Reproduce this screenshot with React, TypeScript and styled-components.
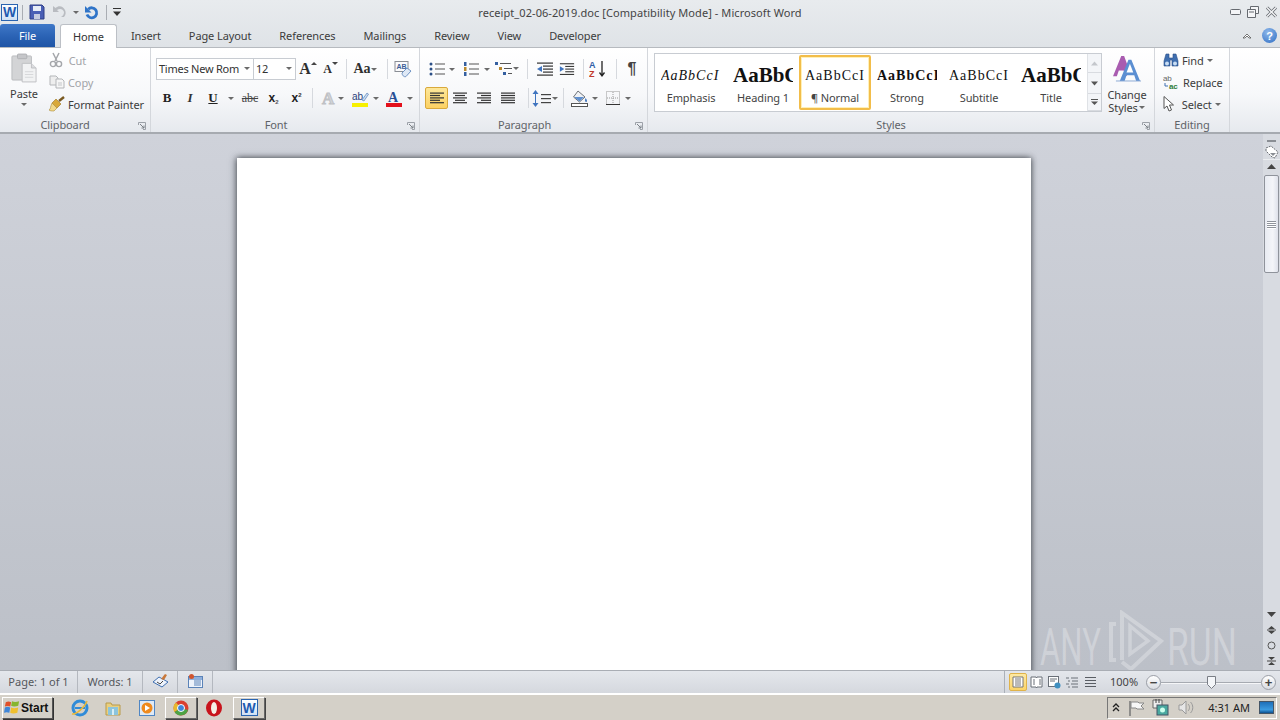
import React from 'react';
import styled, { createGlobalStyle } from 'styled-components';

const Global = createGlobalStyle`
  html, body { margin: 0; padding: 0; overflow: hidden; background: #d4d0c8; }
  * { box-sizing: border-box; }
`;

const Shell = styled.div`
  width: 1280px; height: 720px; overflow: hidden; display: flex; flex-direction: column;
  font-family: "Noto Sans", "Liberation Sans", sans-serif; font-size: 11px; color: #3c3c3c;
`;
const Chrome = styled.div`background: linear-gradient(#e8ebee, #dfe3e7);`;
const TitleBar = styled.div`height: 24px; display: grid; grid-template-columns: 1fr auto 1fr; align-items: center;`;
const Qat = styled.div`display: flex; align-items: center; padding-left: 1px; gap: 0;`;
const QatSep = styled.div<{ $ml: number }>`width: 1px; height: 15px; background: #a9adb3; margin-left: ${p => p.$ml}px;`;
const QatIcon = styled.div<{ $ml: number }>`margin-left: ${p => p.$ml}px; display: flex; align-items: center;`;
const TitleText = styled.div`font-size: 11px; color: #444; letter-spacing: .07px; white-space: nowrap;`;
const WinButtons = styled.div`display: flex; justify-content: flex-end; align-items: center; gap: 6px; padding-right: 2px;`;
const WordBadge = styled.div<{ $s: number }>`
  width: ${p => p.$s}px; height: ${p => p.$s}px; background: linear-gradient(#fdfeff, #cfe0f4); border: 1px solid #2a64b0;
  display: flex; align-items: center; justify-content: center; color: #1e5ab0; font: bold ${p => p.$s - 3}px "Liberation Sans", sans-serif; flex-shrink: 0;
`;
const TabRow = styled.div`height: 23px; display: flex; align-items: flex-end; position: relative; letter-spacing: -.1px;`;
const FileTab = styled.div`
  width: 55px; height: 23px; margin-right: 5px; background: linear-gradient(#3f78c8, #2a62b4 55%, #1f55a6);
  border-radius: 3px 3px 0 0; color: #fff; display: flex; align-items: center; justify-content: center; padding-bottom: 1px;
`;
const Tab = styled.div<{ $active?: boolean }>`
  height: ${p => (p.$active ? 24 : 23)}px; padding: ${p => (p.$active ? '0 12px 1px' : '0 14px 1px')}; display: flex; align-items: center; white-space: nowrap;
  ${p => p.$active ? `background: #fff; border: 1px solid #bcc0c6; border-bottom: 0; border-radius: 3px 3px 0 0; margin-bottom: -1px; z-index: 1; color: #333;` : ''}
`;
const TabTools = styled.div`margin-left: auto; display: flex; align-items: center; gap: 10px; height: 23px; padding-right: 3px;`;
const HelpDot = styled.div`
  width: 15px; height: 15px; border-radius: 50%; background: radial-gradient(circle at 40% 30%, #8fb8ea, #2e6ec4);
  color: #fff; font: bold 11px "Liberation Sans", sans-serif; display: flex; align-items: center; justify-content: center;
`;
const Ribbon = styled.div`
  height: 87px; display: flex; border-top: 1px solid #b6babf; border-bottom: 2px solid #a6aab0; letter-spacing: -.1px;
  background: linear-gradient(#ffffff, #f7f8fa 55%, #e6e9ee);
`;
const Group = styled.div<{ $w: number }>`
  width: ${p => p.$w}px; flex-shrink: 0; display: flex; flex-direction: column; border-right: 1px solid #d4d7dc;
`;
const GroupBody = styled.div<{ $pt?: number; $pl?: number }>`
  height: 69px; padding: ${p => p.$pt ?? 1}px 0 0 ${p => p.$pl ?? 5}px; display: flex;
`;
const GroupFooter = styled.div<{ $pr?: number }>`
  height: 15px; position: relative; display: flex; align-items: center; justify-content: center; color: #5f6368; padding: 0 ${p => p.$pr ?? 0}px 1px 0;
`;
const Launcher = styled.svg`position: absolute; right: 4px; bottom: 2px;`;
const BigButton = styled.div<{ $w: number }>`
  width: ${p => p.$w}px; display: flex; flex-direction: column; align-items: center; text-align: center; line-height: 13px;
`;
const BigIcon = styled.div<{ $mt: number }>`margin-top: ${p => p.$mt}px; display: flex;`;
const BigLabel = styled.div<{ $mt: number }>`margin-top: ${p => p.$mt}px; display: flex; flex-direction: column; align-items: center; gap: ${p => (p.$mt === 5 ? 0 : 3)}px;`;
const LabelLine = styled.div`display: flex; align-items: center; gap: 1px;`;
const Stack = styled.div<{ $ml?: number }>`display: flex; flex-direction: column; margin-left: ${p => p.$ml ?? 0}px;`;
const SmallBtn = styled.div<{ $off?: boolean }>`
  height: 22px; display: flex; align-items: center; gap: 3px; white-space: nowrap; color: ${p => (p.$off ? '#a2a4a8' : '#3c3c3c')};
`;
const Rows = styled.div`display: flex; flex-direction: column; gap: 7px; padding-top: 9px;`;
const Row = styled.div`height: 22px; display: flex; align-items: center;`;
const Combo = styled.div<{ $w: number; $ml?: number }>`
  width: ${p => p.$w}px; height: 22px; margin-left: ${p => p.$ml ?? 0}px; border: 1px solid #c8ccd2; background: #fff; display: flex; align-items: center; justify-content: space-between;
  padding: 0 3px 1px 2px; color: #333; white-space: nowrap; letter-spacing: -.25px;
`;
const Tool = styled.div<{ $w: number; $ml?: number; $on?: boolean }>`
  width: ${p => p.$w}px; height: 22px; margin-left: ${p => p.$ml ?? 0}px; flex-shrink: 0; display: flex; align-items: center; justify-content: center;
  ${p => p.$on ? 'background: linear-gradient(#fde79a, #fcd163); border: 1px solid #d9a93c; border-radius: 2px;' : ''}
`;
const GlyphB = styled.span`font: bold 13px "Liberation Serif", serif; color: #222;`;
const GlyphI = styled.span`font: italic bold 13px "Liberation Serif", serif; color: #333;`;
const GlyphU = styled.span`font: bold 13px "Liberation Serif", serif; color: #222; text-decoration: underline;`;
const GlyphS = styled.span`font: 12px "Liberation Serif", serif; color: #444; text-decoration: line-through;`;
const GlyphX = styled.span`font: bold 12px "Liberation Sans", sans-serif; color: #222; position: relative;`;
const Sub = styled.span<{ $up?: boolean }>`font-size: 6px; color: ${p => (p.$up ? '#333' : '#555')}; vertical-align: ${p => (p.$up ? '5px' : '-2px')};`;
const GlyphA = styled.span<{ $s: number; $c?: string; $stroke?: boolean }>`
  font: bold ${p => p.$s}px "Liberation Serif", serif; color: ${p => p.$c ?? '#2f2f2f'}; line-height: 1;
  ${p => (p.$stroke ? '-webkit-text-stroke: 1px #bfc1c5;' : '')}
`;
const Pilcrow = styled.span`font: bold 16px "Liberation Sans", sans-serif; color: #444;`;
const Caret = styled.div<{ $w?: number; $ml?: number }>`
  width: ${p => p.$w ?? 7}px; margin-left: ${p => p.$ml ?? 0}px; flex-shrink: 0; display: flex; justify-content: center;
  &::after { content: ''; flex-shrink: 0; border-top: 3px solid #6a6a6a; border-left: 3px solid transparent; border-right: 3px solid transparent; }
`;
const VRule = styled.div<{ $ml?: number }>`width: 1px; height: 20px; flex-shrink: 0; margin-left: ${p => p.$ml ?? 0}px; background: #d6d9de;`;
const GrowArrow = styled.svg`align-self: flex-start; margin-top: 3px;`;
const Gallery = styled.div`
  width: 448px; height: 59px; border: 1px solid #c8ccd2; background: #fff; display: flex; position: relative; padding-left: 0;
`;
const StyleCell = styled.div<{ $on?: boolean }>`
  width: 72px; height: 57px; display: flex; flex-direction: column; align-items: center; overflow: hidden; flex-shrink: 0; padding: 0 6px; position: relative;
  ${p => p.$on ? `&::before { content: ''; position: absolute; inset: 1px 0; border: 2px solid #f2bd4a; border-radius: 2px; box-shadow: inset 0 0 0 1px #fff0b8; }` : ''}
`;
const Preview = styled.div<{ $b?: boolean; $i?: boolean; $s: number; $ls?: number }>`
  height: 27px; margin-top: 8px; display: flex; align-items: center; white-space: nowrap; overflow: hidden; width: 60px; justify-content: flex-start;
  font-family: "Liberation Serif", serif; color: #111; font-size: ${p => p.$s}px; font-weight: ${p => (p.$b ? 700 : 400)}; font-style: ${p => (p.$i ? 'italic' : 'normal')};
  letter-spacing: ${p => p.$ls ?? 0}px;
`;
const CellName = styled.div`margin-top: 1px; white-space: nowrap; color: #444;`;
const GalleryScroll = styled.div`
  position: absolute; right: 0; top: 0; bottom: 0; width: 14px; display: flex; flex-direction: column; border-left: 1px solid #dfe2e6; background: #f3f5f8;
`;
const ScrollCell = styled.div<{ $h: number }>`
  height: ${p => p.$h}px; display: flex; align-items: center; justify-content: center; border-bottom: 1px solid #d8dbe0;
`;
const Workspace = styled.div`flex: 1; display: flex; min-height: 0;`;
const Canvas = styled.div`
  flex: 1; position: relative; overflow: hidden; padding: 24px 0 0 237px;
  background: linear-gradient(#cfd2da, #bcc0c8);
`;
const Page = styled.div`width: 794px; height: 1123px; background: #fff; box-shadow: -1px 0 7px rgba(40,44,50,.65), 1px 0 5px rgba(40,44,50,.45);`;
const Watermark = styled.div`
  position: absolute; right: 31px; bottom: 0; width: 192px; height: 60px; color: rgba(255,255,255,.28);
  display: flex; justify-content: space-between;
`;
const MarkWord = styled.div<{ $sx: number; $mr?: number }>`
  font: 400 52px/60px Roboto, sans-serif; transform: scaleX(${p => p.$sx}); transform-origin: left center; white-space: nowrap; width: 62px; margin-top: 8px;
  margin-right: ${p => p.$mr ?? 0}px;
`;
const MarkLogo = styled.svg`position: absolute; left: 68px; top: 0;`;
const ScrollBar = styled.div`width: 17px; background: #d8dbe1; display: flex; flex-direction: column; align-items: center; padding-bottom: 1px;`;
const SplitBox = styled.div`height: 7px; width: 100%; display: flex; align-items: center; justify-content: center; margin-top: 3px;`;
const SplitLine = styled.div`width: 9px; height: 2px; background: #8a8e94;`;
const RulerBtn = styled.div`height: 16px; width: 100%; display: flex; align-items: center; justify-content: center; border-bottom: 1px solid #eceef1;`;
const ScrollArrow = styled.div<{ $h: number; $mb?: number }>`height: ${p => p.$h}px; margin-bottom: ${p => p.$mb ?? 0}px; width: 100%; display: flex; align-items: center; justify-content: center; flex-shrink: 0;`;
const Thumb = styled.div`
  width: 15px; height: 98px; border: 1px solid #8f939b; border-radius: 2px; background: linear-gradient(90deg, #e8ebf2, #f4f5f9 60%, #dee1ea);
  display: flex; flex-direction: column; align-items: center; justify-content: center; gap: 1px;
`;
const Grip = styled.div`width: 9px; height: 1px; background: #8f939b; box-shadow: 0 1px 0 #fff;`;
const TrackFill = styled.div`flex: 1;`;
const StatusBar = styled.div`
  height: 23px; display: flex; align-items: center; border-top: 1px solid #a9adb4; background: linear-gradient(#e4e7ec, #d5d8de); position: relative; color: #55585d;
`;
const StatusCell = styled.div<{ $w: number }>`
  width: ${p => p.$w}px; height: 100%; display: flex; align-items: center; justify-content: center; border-right: 1px solid #b4b8bf; white-space: nowrap; flex-shrink: 0; padding-bottom: 2px;
`;
const StatusRight = styled.div`margin-left: auto; display: flex; align-items: center; height: 100%; padding-right: 4px;`;
const ViewBtn = styled.div<{ $on?: boolean }>`
  width: 18px; height: 18px; display: flex; align-items: center; justify-content: center;
  ${p => p.$on ? 'background: linear-gradient(#fde9a4, #fbd468); border: 1px solid #e0b34a; border-radius: 2px;' : ''}
`;
const ViewDivider = styled.div`width: 1px; height: 22px; background: #aab0b8; margin-right: 4px;`;
const Zoom = styled.div`width: 36px; margin: 0 0 2px 11px; text-align: left; color: #444;`;
const RoundBtn = styled.div`
  width: 15px; height: 15px; border-radius: 50%; border: 1px solid #9a9ea6; background: linear-gradient(#fff, #d9dce2);
  display: flex; align-items: center; justify-content: center; flex-shrink: 0; color: #444; font: bold 13px/1 "Liberation Sans", sans-serif;
`;
const Slider = styled.div`width: 100px; height: 1px; background: #a6aab1; position: relative; box-shadow: 0 1px 0 #f5f6f8;`;
const SliderKnob = styled.svg`position: absolute; left: 46px; top: -6px;`;
const Taskbar = styled.div`
  height: 27px; display: flex; align-items: center; background: #d4d0c8; border-top: 2px solid #fff; padding-left: 2px; position: relative;
`;
const StartBtn = styled.div`
  width: 51px; height: 22px; display: flex; align-items: center; gap: 1px; padding-left: 1px; background: #d4d0c8;
  border: 1px solid; border-color: #fff #555 #555 #fff; box-shadow: 1px 1px 0 #333;
  font: bold 12px "Liberation Sans", sans-serif; color: #111;
`;
const TaskIcon = styled.div<{ $w: number; $ml: number; $raised?: boolean }>`
  width: ${p => p.$w}px; height: 22px; margin-left: ${p => p.$ml}px; display: flex; align-items: center; justify-content: center; flex-shrink: 0;
  ${p => p.$raised ? 'border: 1px solid; border-color: #fff #666 #666 #fff; box-shadow: 1px 1px 0 #444;' : ''}
`;
const Tray = styled.div`
  margin-left: auto; margin-right: 3px; width: 170px; height: 22px; border: 1px solid; border-color: #777 #fff #fff #777; display: flex; align-items: center; padding-left: 4px;
`;
const Clock = styled.div`margin-left: auto; font-size: 11px; color: #222; white-space: nowrap;`;
const TrayIcon = styled.div<{ $ml: number }>`margin-left: ${p => p.$ml}px; display: flex; align-items: center;`;
const ShowDesktop = styled.div`
  width: 15px; height: 13px; margin: 0 2px 0 9px; background: linear-gradient(#1e6fb8, #3b9be0 70%, #0c4f8e); border: 1px solid #456;
`;

const LauncherIcon = () => (
  <Launcher width="8" height="8" viewBox="0 0 8 8">
    <path d="M.5 3V.5H7.5V7.5H5" fill="none" stroke="#9ca1a8" />
    <path d="M2 2 6 6M6 3.5V6H3.5" fill="none" stroke="#7b8087" />
  </Launcher>
);
const Lines = ({ kind }: { kind: 'left' | 'center' | 'right' | 'just' }) => {
  const rows: [number, number][] = kind === 'left' ? [[0, 14], [0, 10], [0, 14], [0, 10], [0, 14]]
    : kind === 'center' ? [[0, 14], [2, 10], [0, 14], [2, 10], [0, 14]]
    : kind === 'right' ? [[0, 14], [4, 10], [0, 14], [4, 10], [0, 14]]
    : [[0, 14], [0, 14], [0, 14], [0, 14], [0, 14]];
  return (
    <svg width="14" height="12" viewBox="0 0 14 12">
      {rows.map(([x, w], i) => <rect key={i} x={x} y={i * 2.4 + .5} width={w} height="1.2" fill="#333" />)}
    </svg>
  );
};
const Bullets = () => (
  <svg width="16" height="14" viewBox="0 0 16 14">
    {[2, 7, 12].map(y => <React.Fragment key={y}><circle cx="2" cy={y} r="1.5" fill="#2b4f86" /><rect x="6" y={y - .5} width="10" height="1" fill="#555" /></React.Fragment>)}
  </svg>
);
const Numbers = () => (
  <svg width="16" height="15" viewBox="0 0 16 15">
    {[2, 7, 12].map((y, i) => <React.Fragment key={y}><rect x="1" y={y - 2} width="2.5" height="4" fill={i === 1 ? '#b8892e' : '#3560a0'} /><rect x="6" y={y - .5} width="10" height="1" fill="#555" /></React.Fragment>)}
  </svg>
);
const MultiList = () => (
  <svg width="24" height="16" viewBox="0 0 24 16">
    <rect x="0" y="1" width="3" height="3" fill="#3560a0" /><rect x="5" y="2" width="11" height="1" fill="#555" />
    <rect x="4" y="6" width="3" height="3" fill="#b8892e" /><rect x="9" y="7" width="8" height="1" fill="#555" />
    <rect x="8" y="11" width="3" height="3" fill="#3560a0" /><rect x="13" y="12" width="4" height="1" fill="#555" />
    <path d="M18 6h6l-3 3z" fill="#6a6a6a" />
  </svg>
);
const Indent = ({ out }: { out?: boolean }) => (
  <svg width="18" height="16" viewBox="0 0 18 16">
    {[2, 5, 8, 11, 14].map((y, i) => <rect key={y} x={i % 4 === 0 ? 1 : 7} y={y - .5} width={i % 4 === 0 ? 16 : 10} height="1.2" fill="#333" />)}
    <path d={out ? 'M6 5v6L1 8z' : 'M1 5v6l5-3z'} fill="#3f74bf" />
  </svg>
);
const Sort = () => (
  <svg width="18" height="18" viewBox="0 0 18 18">
    <text x="0" y="8" fontSize="9" fontWeight="700" fontFamily="Liberation Sans" fill="#2f5da6">A</text>
    <text x="0" y="17" fontSize="9" fontWeight="700" fontFamily="Liberation Sans" fill="#c0392b">Z</text>
    <path d="M13 1v14M10.5 12.5 13 16l2.5-3.5" stroke="#222" strokeWidth="1.3" fill="none" />
  </svg>
);
const LineSpacing = () => (
  <svg width="19" height="17" viewBox="0 0 19 17">
    <path d="M3.5 0 6.5 4h-6zM3.5 17l3-4h-6z" fill="#3f74bf" /><rect x="3" y="4" width="1" height="9" fill="#3f74bf" />
    {[4, 8, 12].map(y => <rect key={y} x="9" y={y} width="10" height="1.2" fill="#444" />)}
  </svg>
);
const Shading = () => (
  <svg width="18" height="17" viewBox="0 0 18 17">
    <path d="M7 1 14 7 8.5 12 2.5 7z" fill="#eef1f5" stroke="#6e7278" />
    <path d="M3 7h10l-4.5 4.5z" fill="#5f8fcf" /><path d="M14.5 8c1.5 2 2 3 1 4-1.2.5-2-1-1-4z" fill="#3f74bf" />
    <rect x=".5" y="13.5" width="16" height="3" fill="#fff" stroke="#555" />
  </svg>
);
const Borders = () => (
  <svg width="14" height="14" viewBox="0 0 14 14">
    <rect x=".5" y=".5" width="13" height="13" fill="none" stroke="#999" strokeDasharray="1 1" />
    <path d="M7 1v12M1 7h12" stroke="#999" strokeDasharray="1 1" /><path d="M0 13.5h14" stroke="#333" />
  </svg>
);
const PasteIcon = () => (
  <svg width="26" height="30" viewBox="0 0 28 32">
    <rect x="1" y="3" width="21" height="26" rx="1" fill="#d3d4d6" stroke="#b9babd" />
    <rect x="7" y="1" width="10" height="5" rx="1" fill="#c5c6c9" stroke="#aeafb2" />
    <path d="M12 11h10l5 5v15H12z" fill="#f1f2f3" stroke="#bdbec1" />
    <path d="M22 11v5h5" fill="#dcdde0" stroke="#bdbec1" />
    <path d="M15 20h9M15 23h9M15 26h9" stroke="#d5d6d8" />
  </svg>
);
const Scissors = () => (
  <svg width="14" height="16" viewBox="0 0 14 16">
    <path d="M4 1 8 9M10 1 6 9" stroke="#a5a7ab" strokeWidth="1.5" fill="none" />
    <circle cx="4" cy="12" r="2.6" fill="none" stroke="#a5a7ab" strokeWidth="1.4" /><circle cx="10" cy="12" r="2.6" fill="none" stroke="#a5a7ab" strokeWidth="1.4" />
  </svg>
);
const CopyIcon = () => (
  <svg width="16" height="14" viewBox="0 0 16 14">
    <path d="M1 1h6l2 2v7H1z" fill="#eee" stroke="#b4b6b9" /><path d="M7 4h6l2 2v7H7z" fill="#f6f6f6" stroke="#b4b6b9" />
    <path d="M9 8h4M9 10h4" stroke="#c4c6c9" />
  </svg>
);
const Brush = () => (
  <svg width="16" height="16" viewBox="0 0 16 16">
    <path d="M10 5 15 1" stroke="#7a5a22" strokeWidth="2.4" />
    <path d="M7 3 12 8 8 12 3 7z" fill="#d9a93a" stroke="#9a7420" strokeWidth=".6" />
    <path d="M3 7 8 12 5 15C3 15 1 15 0 14 2 13 1 11 3 7z" fill="#f2d98a" stroke="#a98a3a" strokeWidth=".6" />
  </svg>
);
const Grow = ({ big }: { big?: boolean }) => (
  <>
    <GlyphA $s={big ? 16 : 12}>A</GlyphA>
    <GrowArrow width="6" height="8" viewBox="0 0 6 8">
      <path d={big ? 'M0 4 3 1l3 3z' : 'M0 1h6L3 4z'} fill="#444" />
    </GrowArrow>
  </>
);
const ClearFmt = () => (
  <svg width="18" height="17" viewBox="0 0 18 17">
    <rect x="1" y=".5" width="13" height="10" fill="#fbfbfc" stroke="#8a8e95" />
    <text x="2.5" y="8" fontSize="7" fontWeight="700" fontFamily="Liberation Sans" fill="#3b5f98">AB</text>
    <path d="M8 12 13 7l4 3-5 5.5c-2 1-4-1.5-4-3.5z" fill="#dfe9f6" stroke="#6f93c4" />
  </svg>
);
const Highlight = () => (
  <svg width="17" height="17" viewBox="0 0 17 17">
    <text x="0" y="10" fontSize="10" fontFamily="Liberation Sans" fill="#2a3f7a">ab</text>
    <path d="M10 10 15 3l1.5 1.2L12 11z" fill="#c9ddf3" stroke="#5b83b8" strokeWidth=".7" />
    <rect x="0" y="13" width="16" height="4" fill="#f7f000" />
  </svg>
);
const FontColor = () => (
  <svg width="16" height="17" viewBox="0 0 16 17">
    <text x="2" y="12" fontSize="14" fontWeight="700" fontFamily="Liberation Serif" fill="#284f96">A</text>
    <rect x="0" y="13" width="16" height="4" fill="#e3101c" />
  </svg>
);
const ChangeStyles = () => (
  <svg width="31" height="28" viewBox="0 0 32 29">
    <path d="M1 22 9.5 1h3L18 16l-3 6-3-6H7l-2 6z" fill="#a95cb0" />
    <path d="M8 27 17 5h3l9 22h-4l-2-6h-8l-2 6z" fill="#5b8fd2" />
    <path d="M15 18h7l-3.5-9z" fill="#fff" />
    <rect x="4" y="26.4" width="26" height="1" fill="#8aa9d4" />
  </svg>
);
const Binoculars = () => (
  <svg width="16" height="14" viewBox="0 0 16 14">
    <path d="M3 1h3v4h4V1h3l2 7v5H9V7H7v6H1V8z" fill="#3f6fb0" stroke="#2b4f86" strokeWidth=".6" />
    <circle cx="4" cy="10.5" r="2" fill="#c9ddf3" /><circle cx="12" cy="10.5" r="2" fill="#c9ddf3" />
  </svg>
);
const ReplaceIcon = () => (
  <svg width="17" height="16" viewBox="0 0 17 16">
    <text x="0" y="7" fontSize="8" fontFamily="Liberation Sans" fill="#666">ab</text>
    <text x="6" y="15" fontSize="8" fontWeight="700" fontFamily="Liberation Sans" fill="#2f7d3a">ac</text>
    <path d="M2 9v3h3" fill="none" stroke="#3f6fb0" />
  </svg>
);
const Cursor = () => (
  <svg width="13" height="16" viewBox="0 0 13 16">
    <path d="M1 .5v12l3-2.5 2 5 2.5-1-2-5h4z" fill="#fff" stroke="#555" />
  </svg>
);
const Up = ({ c = '#555', w = 9 }: { c?: string; w?: number }) => <svg width={w} height="5" viewBox="0 0 9 5"><path d="M0 5 4.5 0 9 5z" fill={c} /></svg>;
const Down = ({ c = '#555', w = 9 }: { c?: string; w?: number }) => <svg width={w} height="5" viewBox="0 0 9 5"><path d="M0 0h9L4.5 5z" fill={c} /></svg>;
const PageGlyph = () => (
  <svg width="12" height="12" viewBox="0 0 12 12"><path d="M1 1h10v10H1z" fill="#fff" stroke="#777" /><path d="M3 3h6M3 5h6M3 7h6M3 9h6" stroke="#777" /></svg>
);
const App = () => (
  <Shell>
    <Global />
    <Chrome>
      <TitleBar>
        <Qat>
          <WordBadge $s={17}>W</WordBadge>
          <QatSep $ml={4} />
          <QatIcon $ml={6}>
            <svg width="16" height="16" viewBox="0 0 16 16">
              <path d="M1 1h12l2 2v12H1z" fill="#4a5fb5" stroke="#2f3f85" />
              <rect x="4" y="2" width="8" height="5" fill="#e6ecf7" /><rect x="5" y="10" width="6" height="5" fill="#c5cbe0" />
            </svg>
          </QatIcon>
          <QatIcon $ml={7}>
            <svg width="15" height="14" viewBox="0 0 15 14">
              <path d="M1 1v6h6L5 5c3-2 6-1 7 2 0 2-1 4-3 5h3c2-2 2-5 1-7C11 1 7 0 3.5 3z" fill="#b9bcc1" />
            </svg>
          </QatIcon>
          <Caret $w={6} $ml={6} />
          <QatIcon $ml={5}>
            <svg width="15" height="15" viewBox="0 0 15 15">
              <path d="M4.2 4.2A5 5 0 1 1 3 9.5" fill="none" stroke="#2f74c8" strokeWidth="2.8" />
              <path d="M1 1v6.500h6.500z" fill="#2f74c8" />
            </svg>
          </QatIcon>
          <QatSep $ml={7} />
          <QatIcon $ml={6}>
            <svg width="8" height="9" viewBox="0 0 8 9">
              <rect x="0" y="0" width="8" height="1" fill="#333" /><path d="M0 3.5h8L4 8z" fill="#333" />
            </svg>
          </QatIcon>
        </Qat>
        <TitleText>receipt_02-06-2019.doc [Compatibility Mode] -  Microsoft Word</TitleText>
        <WinButtons>
          <svg width="11" height="6" viewBox="0 0 11 6"><rect x=".5" y=".5" width="10" height="5" rx="1" fill="#f4f5f7" stroke="#666a70" /></svg>
          <svg width="12" height="12" viewBox="0 0 12 12"><path d="M3.5.5h8v7h-8z" fill="#f4f5f7" stroke="#666a70" /><path d="M.5 3.5h8v8h-8z" fill="#f4f5f7" stroke="#666a70" /><path d="M2 6h5" stroke="#666a70" /></svg>
          <svg width="13" height="12" viewBox="0 0 13 12"><path d="M2 1.5 11 10.500M11 1.5 2 10.500" stroke="#666a70" strokeWidth="3" /><path d="M2 1.5 11 10.500M11 1.5 2 10.500" stroke="#f4f5f7" strokeWidth="1.4" /></svg>
        </WinButtons>
      </TitleBar>
      <TabRow>
        <FileTab>File</FileTab>
        <Tab $active>Home</Tab>
        <Tab>Insert</Tab>
        <Tab>Page Layout</Tab>
        <Tab>References</Tab>
        <Tab>Mailings</Tab>
        <Tab>Review</Tab>
        <Tab>View</Tab>
        <Tab>Developer</Tab>
        <TabTools>
          <svg width="10" height="6" viewBox="0 0 10 6"><path d="M1 5 5 1l4 4H7L5 3 3 5z" fill="#fff" stroke="#555" strokeWidth=".8" /></svg>
          <HelpDot>?</HelpDot>
        </TabTools>
      </TabRow>
    </Chrome>
    <Ribbon>
      <Group $w={151}>
        <GroupBody $pl={8}>
          <BigButton $w={32}>
            <BigIcon $mt={4}><PasteIcon /></BigIcon>
            <BigLabel $mt={4}>Paste<Caret /></BigLabel>
          </BigButton>
          <Stack $ml={9}>
            <SmallBtn $off><Scissors />&nbsp;Cut</SmallBtn>
            <SmallBtn $off><CopyIcon />Copy</SmallBtn>
            <SmallBtn><Brush />Format Painter</SmallBtn>
          </Stack>
        </GroupBody>
        <GroupFooter $pr={20}>Clipboard<LauncherIcon /></GroupFooter>
      </Group>
      <Group $w={269}>
        <GroupBody>
          <Rows>
            <Row>
              <Combo $w={98}>Times New Rom<Caret /></Combo>
              <Combo $w={43} $ml={-1}>12<Caret /></Combo>
              <Tool $w={24}><Grow big /></Tool>
              <Tool $w={21}><Grow /></Tool>
              <VRule $ml={5} />
              <Tool $w={38}><GlyphA $s={14}>Aa</GlyphA><Caret $w={8} /></Tool>
              <VRule $ml={2} />
              <Tool $w={30}><ClearFmt /></Tool>
            </Row>
            <Row>
              <Tool $w={22}><GlyphB>B</GlyphB></Tool>
              <Tool $w={24}><GlyphI>I</GlyphI></Tool>
              <Tool $w={22}><GlyphU>U</GlyphU></Tool>
              <Caret $w={14} />
              <Tool $w={24}><GlyphS>abc</GlyphS></Tool>
              <Tool $w={23}><GlyphX>x<Sub>2</Sub></GlyphX></Tool>
              <Tool $w={23}><GlyphX>x<Sub $up>2</Sub></GlyphX></Tool>
              <VRule $ml={4} />
              <Tool $w={24} $ml={3}><GlyphA $s={17} $c="#d2d4d8" $stroke>A</GlyphA></Tool>
              <Caret $w={2} />
              <Tool $w={30} $ml={3}><Highlight /></Tool>
              <Caret $w={2} />
              <Tool $w={30} $ml={2}><FontColor /></Tool>
              <Caret $w={2} />
            </Row>
          </Rows>
        </GroupBody>
        <GroupFooter $pr={18}>Font<LauncherIcon /></GroupFooter>
      </Group>
      <Group $w={228}>
        <GroupBody>
          <Rows>
            <Row>
              <Tool $w={24}><Bullets /></Tool>
              <Caret $w={6} />
              <Tool $w={28} $ml={2}><Numbers /></Tool>
              <Caret $w={4} />
              <Tool $w={36}><MultiList /></Tool>
              <VRule $ml={2} />
              <Tool $w={28} $ml={3}><Indent out /></Tool>
              <Tool $w={16}><Indent /></Tool>
              <VRule $ml={8} />
              <Tool $w={28}><Sort /></Tool>
              <VRule $ml={4} />
              <Tool $w={30}><Pilcrow>¶</Pilcrow></Tool>
            </Row>
            <Row>
              <Tool $w={23} $on><Lines kind="left" /></Tool>
              <Tool $w={24}><Lines kind="center" /></Tool>
              <Tool $w={24}><Lines kind="right" /></Tool>
              <Tool $w={24}><Lines kind="just" /></Tool>
              <VRule $ml={8} />
              <Tool $w={24}><LineSpacing /></Tool>
              <Caret $w={4} />
              <VRule $ml={6} />
              <Tool $w={26} $ml={3}><Shading /></Tool>
              <Caret $w={4} />
              <Tool $w={26} $ml={3}><Borders /></Tool>
              <Caret $w={4} />
            </Row>
          </Rows>
        </GroupBody>
        <GroupFooter $pr={18}>Paragraph<LauncherIcon /></GroupFooter>
      </Group>
      <Group $w={507}>
        <GroupBody $pt={5} $pl={6}>
          <Gallery>
            <StyleCell><Preview $i $s={14} $ls={1}>AaBbCcI</Preview><CellName>Emphasis</CellName></StyleCell>
            <StyleCell><Preview $b $s={21}>AaBbC</Preview><CellName>Heading 1</CellName></StyleCell>
            <StyleCell $on><Preview $s={14} $ls={1}>AaBbCcI</Preview><CellName>¶ Normal</CellName></StyleCell>
            <StyleCell><Preview $b $s={14} $ls={1}>AaBbCcI</Preview><CellName>Strong</CellName></StyleCell>
            <StyleCell><Preview $s={14} $ls={1}>AaBbCcI</Preview><CellName>Subtitle</CellName></StyleCell>
            <StyleCell><Preview $b $s={21}>AaBbC</Preview><CellName>Title</CellName></StyleCell>
            <GalleryScroll>
              <ScrollCell $h={19}><Up c="#c4c7cc" w={7} /></ScrollCell>
              <ScrollCell $h={21}><Down w={7} /></ScrollCell>
              <ScrollCell $h={17}>
                <svg width="7" height="6" viewBox="0 0 7 6"><rect width="7" height="1" fill="#555" /><path d="M0 2.5h7L3.5 6z" fill="#555" /></svg>
              </ScrollCell>
            </GalleryScroll>
          </Gallery>
          <BigButton $w={50}>
            <BigIcon $mt={2}><ChangeStyles /></BigIcon>
            <BigLabel $mt={5}>Change<LabelLine>Styles<Caret /></LabelLine></BigLabel>
          </BigButton>
        </GroupBody>
        <GroupFooter $pr={20}>
          Styles
          <LauncherIcon />
        </GroupFooter>
      </Group>
      <Group $w={75}>
        <GroupBody $pl={8}>
          <Stack>
            <SmallBtn><Binoculars />Find<Caret /></SmallBtn>
            <SmallBtn><ReplaceIcon />Replace</SmallBtn>
            <SmallBtn><Cursor />&nbsp;Select<Caret /></SmallBtn>
          </Stack>
        </GroupBody>
        <GroupFooter>Editing</GroupFooter>
      </Group>
    </Ribbon>
    <Workspace>
      <Canvas>
        <Page />
        <Watermark>
          <MarkWord $sx={.6}>ANY</MarkWord>
          <MarkLogo width="56" height="62" viewBox="0 0 56 62">
            <path d="M8 14H3v36l5 0" fill="none" stroke="currentColor" strokeWidth="4" />
            <path d="M14 50V3l39 28-30 28-9-7" fill="none" stroke="currentColor" strokeWidth="4" />
            <path d="M22 16v28l18-13z" fill="none" stroke="currentColor" strokeWidth="3.5" />
          </MarkLogo>
          <MarkWord $sx={.68} $mr={3}>RUN</MarkWord>
        </Watermark>
      </Canvas>
      <ScrollBar>
        <SplitBox><SplitLine /></SplitBox>
        <RulerBtn>
          <svg width="14" height="14" viewBox="0 0 14 14"><path d="M1 3 6 1l7 6-3 6-3-1-6-6z" fill="#fff" stroke="#6a6e74" strokeDasharray="2 1" /><path d="M5 8l3 3 3-3z" fill="#8a8e94" /></svg>
        </RulerBtn>
        <ScrollArrow $h={13} $mb={2}><Up c="#444" w={11} /></ScrollArrow>
        <Thumb><Grip /><Grip /><Grip /><Grip /></Thumb>
        <TrackFill />
        <ScrollArrow $h={16}><Down c="#444" w={11} /></ScrollArrow>
        <ScrollArrow $h={16}>
          <svg width="9" height="8" viewBox="0 0 9 8"><rect width="9" height="1" y="3.5" fill="#444" /><path d="M1 3 4.5 0 8 3zM1 5h7L4.5 8z" fill="#444" /></svg>
        </ScrollArrow>
        <ScrollArrow $h={15}>
          <svg width="9" height="9" viewBox="0 0 9 9"><circle cx="4.5" cy="4.5" r="3.5" fill="none" stroke="#555" /></svg>
        </ScrollArrow>
        <ScrollArrow $h={16}>
          <svg width="9" height="8" viewBox="0 0 9 8"><rect width="9" height="1" y="3.5" fill="#444" /><path d="M1 0h7L4.5 3zM1 8l3.5-3L8 8z" fill="#444" /></svg>
        </ScrollArrow>
      </ScrollBar>
    </Workspace>
    <StatusBar>
      <StatusCell $w={78}>Page: 1 of 1</StatusCell>
      <StatusCell $w={65}>Words: 1</StatusCell>
      <StatusCell $w={35}>
        <svg width="17" height="16" viewBox="0 0 17 16">
          <path d="M1 9 7 4l9 5-6 5z" fill="#eef3fb" stroke="#3f6fb0" /><path d="M9 6 13 1l2 1-3 5z" fill="#c9783a" /><path d="M5 9l3 2 3-3" fill="none" stroke="#444" />
        </svg>
      </StatusCell>
      <StatusCell $w={35}>
        <svg width="15" height="14" viewBox="0 0 15 14">
          <rect x=".5" y="2.5" width="14" height="11" fill="#eef3fb" stroke="#5b83b8" />
          <rect x="1" y="3" width="13" height="3" fill="#8fb0dc" /><path d="M6 7h7M6 9h7M6 11h7" stroke="#5b83b8" />
          <circle cx="3.5" cy="2.5" r="2.5" fill="#d0552f" />
        </svg>
      </StatusCell>
      <StatusRight>
        <ViewDivider />
        <ViewBtn $on><PageGlyph /></ViewBtn>
        <ViewBtn>
          <svg width="13" height="12" viewBox="0 0 13 12"><path d="M1 1h5l.5 1L7 1h5v10H7l-.5 1-.5-1H1z" fill="#fff" stroke="#6a7078" /><path d="M3 4h2M3 6h2M3 8h2M9 4h2M9 6h2M9 8h2" stroke="#6a7078" /></svg>
        </ViewBtn>
        <ViewBtn>
          <svg width="13" height="13" viewBox="0 0 13 13"><rect x=".5" y=".5" width="10" height="10" fill="#fff" stroke="#6a7078" /><path d="M2 3h7M2 5h5" stroke="#6a7078" /><circle cx="9.5" cy="9.5" r="3" fill="#3f8fc0" /></svg>
        </ViewBtn>
        <ViewBtn>
          <svg width="12" height="11" viewBox="0 0 12 11"><path d="M0 1h3M5 1h7M2 4h2M6 4h6M0 7h3M5 7h7M2 10h2M6 10h6" stroke="#6a7078" /></svg>
        </ViewBtn>
        <ViewBtn>
          <svg width="11" height="10" viewBox="0 0 11 10"><path d="M0 .5h11M0 3.5h11M0 6.5h11M0 9.5h11" stroke="#5a5e64" /></svg>
        </ViewBtn>
        <Zoom>100%</Zoom>
        <RoundBtn>−</RoundBtn>
        <Slider><SliderKnob width="9" height="13" viewBox="0 0 9 13"><path d="M.5.5h8v8l-4 4-4-4z" fill="#f4f6f9" stroke="#7a7e86" /></SliderKnob></Slider>
        <RoundBtn>+</RoundBtn>
      </StatusRight>
    </StatusBar>
    <Taskbar>
      <StartBtn>
        <svg width="16" height="15" viewBox="0 0 18 16">
          <path d="M2 2c2-1 4-1 6 0L7 7C5 6 3 6 1 7z" fill="#e0512b" /><path d="M9 1c2 1 5 1 8 0l-1 5c-3 1-6 1-8 0z" fill="#86b52f" />
          <path d="M1 8c2-1 4-1 6 0l-1 6c-2-1-4-1-6 0z" fill="#3f86d8" /><path d="M8 8c2 1 5 1 8 0l-1 6c-3 1-6 1-8 0z" fill="#f0bf2e" />
        </svg>
        Start
      </StartBtn>
      <TaskIcon $w={18} $ml={18}>
        <svg width="18" height="18" viewBox="0 0 18 18">
          <circle cx="9" cy="9" r="7" fill="none" stroke="#2f8bd8" strokeWidth="3" /><path d="M4 9h10" stroke="#2f8bd8" strokeWidth="2" />
          <path d="M1 15C5 16 14 8 16 2" fill="none" stroke="#e9b93a" strokeWidth="1.5" />
        </svg>
      </TaskIcon>
      <TaskIcon $w={16} $ml={16}>
        <svg width="16" height="16" viewBox="0 0 16 16">
          <path d="M1 3h5l1 2h8v10H1z" fill="#e9cf7e" stroke="#b89a4a" /><rect x="3" y="7" width="10" height="8" fill="#8cc4dc" /><rect x="7" y="9" width="2" height="6" fill="#d8eef6" />
        </svg>
      </TaskIcon>
      <TaskIcon $w={16} $ml={18}>
        <svg width="16" height="16" viewBox="0 0 16 16">
          <rect x=".5" y=".5" width="15" height="15" fill="#dfeaf6" stroke="#4f86c4" /><circle cx="8" cy="8" r="5.5" fill="#ef8a1d" /><path d="M6 5 11 8 6 11z" fill="#fff" />
        </svg>
      </TaskIcon>
      <TaskIcon $w={32} $ml={10} $raised>
        <svg width="16" height="16" viewBox="0 0 16 16">
          <circle cx="8" cy="8" r="7.5" fill="#d9402f" /><path d="M8 8 1.5 12A7.5 7.500 0 0 1 3 2.5z" fill="#e7b92e" /><path d="M8 8 1.5 12A7.5 7.500 0 0 0 15 10z" fill="#4da345" /><circle cx="8" cy="8" r="3.5" fill="#3f86d8" stroke="#fff" />
        </svg>
      </TaskIcon>
      <TaskIcon $w={18} $ml={8}>
        <svg width="18" height="18" viewBox="0 0 18 18">
          <ellipse cx="9" cy="9" rx="8" ry="8.5" fill="#c8141c" /><ellipse cx="9" cy="9" rx="3" ry="6" fill="#f4f0e6" />
        </svg>
      </TaskIcon>
      <TaskIcon $w={32} $ml={10} $raised><WordBadge $s={17}>W</WordBadge></TaskIcon>
      <Tray>
        <svg width="8" height="9" viewBox="0 0 8 9"><path d="M1 4 4 1l3 3M1 8 4 5l3 3" fill="none" stroke="#222" strokeWidth="1.3" /></svg>
        <TrayIcon $ml={8}>
          <svg width="17" height="16" viewBox="0 0 17 16"><path d="M2 1v15" stroke="#777" strokeWidth="1.5" /><path d="M3 2h7l1 1h5l-3 3 3 3H9L8 8H3z" fill="#f7f7f7" stroke="#888" /></svg>
        </TrayIcon>
        <TrayIcon $ml={7}>
          <svg width="17" height="17" viewBox="0 0 17 17">
            <path d="M1 1h9v8H1z" fill="#eee" stroke="#666" /><path d="M4 0v4M7 0v4" stroke="#444" /><rect x="5" y="6" width="11" height="10" fill="#4aa9a0" stroke="#456" /><circle cx="10.5" cy="11" r="2.5" fill="#cfe" />
          </svg>
        </TrayIcon>
        <TrayIcon $ml={9}>
          <svg width="16" height="15" viewBox="0 0 16 15"><path d="M1 5h3l4-4v13l-4-4H1z" fill="#e6e6e6" stroke="#9a9a9a" /><path d="M10 4c2 2 2 5 0 7M12.5 2c3 3 3 8 0 11" fill="none" stroke="#9a9a9a" /></svg>
        </TrayIcon>
        <Clock>4:31 AM</Clock>
        <ShowDesktop />
      </Tray>
    </Taskbar>
  </Shell>
);

export default App;
